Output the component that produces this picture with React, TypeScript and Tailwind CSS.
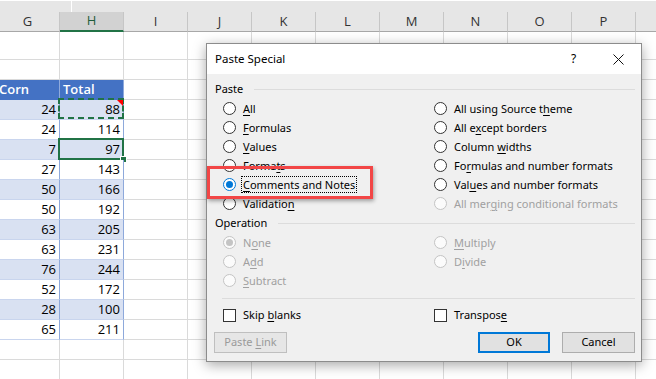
import React from 'react';

const cols = ['G', 'H', 'I', 'J', 'K', 'L', 'M', 'N', 'O', 'P', 'Q'];

const data: [number, number][] = [
  [24, 88], [24, 114], [7, 97], [27, 143], [50, 166], [50, 192],
  [63, 205], [63, 231], [76, 244], [52, 172], [28, 100], [65, 211],
];

// text with one underlined accelerator letter
const Acc = ({ t, i }: { t: string; i: number }) => (
  <span>
    {t.slice(0, i)}
    <span className="underline underline-offset-[2px] decoration-1">{t[i]}</span>
    {t.slice(i + 1)}
  </span>
);

const Radio = ({ checked, disabled }: { checked?: boolean; disabled?: boolean }) => {
  let ring = 'border-[#333333] bg-white';
  if (disabled) ring = 'border-[#c4c4c4] bg-[#fbfbfb]';
  else if (checked) ring = 'border-[#0078d7] bg-white';
  return (
    <span className={`flex h-[13px] w-[13px] shrink-0 items-center justify-center rounded-full border ${ring}`}>
      {checked && (
        <span className={`h-[7px] w-[7px] rounded-full ${disabled ? 'bg-[#c4c4c4]' : 'bg-[#0078d7]'}`} />
      )}
    </span>
  );
};

interface Opt {
  t: string;
  i: number;
  checked?: boolean;
  disabled?: boolean;
  focus?: boolean;
}

const Option = ({ o }: { o: Opt }) => (
  <div className="flex h-[19px] items-center gap-[7px]">
    <Radio checked={o.checked} disabled={o.disabled} />
    <span
      className={`leading-[15px] ${o.disabled ? 'text-[#a0a0a0]' : 'text-black'} ${
        o.focus ? 'outline-1 outline-dotted outline-black px-[1px] -ml-[1px]' : ''
      }`}
    >
      <Acc t={o.t} i={o.i} />
    </span>
  </div>
);

const GroupLabel = ({ label, h }: { label: string; h: string }) => (
  <div className={`flex items-center pl-[8px] pr-[6px] ${h}`}>
    <span>{label}</span>
    <div className="ml-[11px] h-px flex-1 bg-[#dcdcdc]" />
  </div>
);

const pasteLeft: Opt[] = [
  { t: 'All', i: 0 },
  { t: 'Formulas', i: 0 },
  { t: 'Values', i: 0 },
  { t: 'Formats', i: 5 },
  { t: 'Comments and Notes', i: 0, checked: true, focus: true },
  { t: 'Validation', i: 9 },
];

const pasteRight: Opt[] = [
  { t: 'All using Source theme', i: 18 },
  { t: 'All except borders', i: 5 },
  { t: 'Column widths', i: 7 },
  { t: 'Formulas and number formats', i: 2 },
  { t: 'Values and number formats', i: 3 },
  { t: 'All merging conditional formats', i: 7, disabled: true },
];

const opLeft: Opt[] = [
  { t: 'None', i: 1, checked: true, disabled: true },
  { t: 'Add', i: 1, disabled: true },
  { t: 'Subtract', i: 0, disabled: true },
];

const opRight: Opt[] = [
  { t: 'Multiply', i: 0, disabled: true },
  { t: 'Divide', i: 1, disabled: true },
];

const PasteSpecial = () => (
  <div className="absolute left-[206px] top-[43px] w-[436px] border border-[#8c8c8c] bg-[#f0f0f0] text-[11px] text-black shadow-[0_3px_12px_rgba(0,0,0,0.35)] font-['Noto_Sans',sans-serif]">
    {/* title bar */}
    <div className="flex h-[30px] items-center bg-white">
      <span className="flex-1 pl-[8px] text-[11.5px]">Paste Special</span>
      <span className="flex h-full w-[45px] items-center justify-center text-[12px]">?</span>
      <span className="flex h-full w-[45px] items-center justify-center">
        <svg width="11" height="11" viewBox="0 0 11 11">
          <path d="M0.5 0.5 L10.5 10.5 M10.5 0.5 L0.5 10.5" stroke="#111" strokeWidth="1" />
        </svg>
      </span>
    </div>

    {/* body */}
    <div className="flex flex-col pt-[5px] pb-[8px]">
      <GroupLabel label="Paste" h="h-[20px]" />
      <div className="grid grid-cols-[211px_1fr] pl-[16px]">
        <div className="flex flex-col">
          {pasteLeft.map((o) => (
            <Option key={o.t} o={o} />
          ))}
        </div>
        <div className="flex flex-col">
          {pasteRight.map((o) => (
            <Option key={o.t} o={o} />
          ))}
        </div>
      </div>

      <GroupLabel label="Operation" h="h-[20px]" />
      <div className="grid grid-cols-[211px_1fr] pl-[16px]">
        <div className="flex flex-col">
          {opLeft.map((o) => (
            <Option key={o.t} o={o} />
          ))}
        </div>
        <div className="flex flex-col">
          {opRight.map((o) => (
            <Option key={o.t} o={o} />
          ))}
        </div>
      </div>

      <div className="mt-[8px] ml-[15px] mr-[6px] h-px bg-[#dcdcdc]" />

      <div className="mt-[7px] grid h-[18px] grid-cols-[211px_1fr] pl-[16px]">
        <div className="flex items-center gap-[7px]">
          <span className="h-[13px] w-[13px] border border-[#333333] bg-white" />
          <Acc t="Skip blanks" i={5} />
        </div>
        <div className="flex items-center gap-[7px]">
          <span className="h-[13px] w-[13px] border border-[#333333] bg-white" />
          <Acc t="Transpose" i={8} />
        </div>
      </div>

      <div className="mt-[8px] flex h-[21px] pl-[7px] pr-[6px]">
        <div className="flex w-[73px] items-center justify-center border border-[#bfbfbf] bg-[#e6e6e6] text-[#9a9a9a]">
          <Acc t="Paste Link" i={6} />
        </div>
        <div className="flex-1" />
        <div className="flex w-[72px] items-center justify-center border-2 border-[#0078d7] bg-[#e1e1e1]">
          OK
        </div>
        <div className="ml-[12px] flex w-[73px] items-center justify-center border border-[#adadad] bg-[#e1e1e1]">
          Cancel
        </div>
      </div>
    </div>
  </div>
);

const App: React.FC = () => {
  return (
    <div className="relative h-[379px] w-[656px] overflow-hidden bg-white font-['Open_Sans',sans-serif]">
      <div className="-ml-[4px] w-[710px]">
        {/* formula bar edge */}
        <div className="flex h-[12px] border-t border-white bg-[#e6e6e6]">
          <div className="w-[76px] border-r border-white" />
        </div>

        {/* column headers (Q lies past the window edge, its letter is not visible) */}
        <div className="flex h-[20px]">
          {cols.map((c) => (
            <div
              key={c}
              className={`flex w-[64px] shrink-0 items-center justify-center border-r border-[#c6c6c6] text-[13px] ${
                c === 'H'
                  ? 'border-b-2 border-b-[#217346] bg-[#d2d2d2] text-[#1e5e3a]'
                  : 'border-b border-b-[#a8a8a8] bg-[#e6e6e6] text-[#333333]'
              }`}
            >
              {c === 'Q' ? '' : c}
            </div>
          ))}
        </div>

        {/* blank rows */}
        {[28, 20].map((h, r) => (
          <div key={r} className={`flex ${h === 28 ? 'h-[28px]' : 'h-[20px]'}`}>
            {cols.map((c) => (
              <div key={c} className="w-[64px] shrink-0 border-r border-b border-[#dadada]" />
            ))}
          </div>
        ))}

        {/* table header */}
        <div className="flex h-[20px] text-[13px]">
          <div className="flex w-[64px] shrink-0 items-center border-r border-b border-r-[#8faadc] border-b-[#4472c4] bg-[#4472c4] pl-[3px] font-semibold text-white">
            Corn
          </div>
          <div className="flex w-[64px] shrink-0 items-center border-r border-b border-r-[#8ea9db] border-b-[#4472c4] bg-[#4472c4] pl-[3px] font-semibold text-white">
            Total
          </div>
          {cols.slice(2).map((c) => (
            <div key={c} className="w-[64px] shrink-0 border-r border-b border-[#dadada]" />
          ))}
        </div>

        {/* table rows */}
        {data.map(([g, h], r) => {
          const band = r % 2 === 0 ? 'bg-[#d9e1f2]' : 'bg-white';
          return (
            <div key={r} className="flex h-[20px] text-[13px] text-black">
              <div className={`flex w-[64px] shrink-0 items-center justify-end border-r border-b border-r-[#8ea9db] border-b-[#c9d5ee] pr-[3px] ${band}`}>
                {g}
              </div>
              <div className={`relative flex w-[64px] shrink-0 items-center justify-end border-r border-b border-r-[#8ea9db] border-b-[#c9d5ee] pr-[3px] ${band}`}>
                {h}
                {r === 0 && (
                  <>
                    <div className="absolute -left-[2px] -top-[2px] h-[21px] w-[66px] border-2 border-dashed border-[#217346]" />
                    <div className="absolute right-0 top-0 h-0 w-0 border-l-[6px] border-t-[6px] border-l-transparent border-t-[#ff0000]" />
                  </>
                )}
                {r === 2 && (
                  <>
                    <div className="absolute -left-[2px] -top-[2px] h-[22px] w-[66px] border-2 border-[#217346]" />
                    <div className="absolute -bottom-[4px] -right-[4px] h-[7px] w-[7px] border border-white bg-[#217346]" />
                  </>
                )}
              </div>
              {cols.slice(2).map((c) => (
                <div key={c} className="w-[64px] shrink-0 border-r border-b border-[#dadada]" />
              ))}
            </div>
          );
        })}

        {/* trailing rows */}
        {[0, 1].map((r) => (
          <div key={r} className="flex h-[20px]">
            {cols.map((c) => (
              <div key={c} className="w-[64px] shrink-0 border-r border-b border-[#dadada]" />
            ))}
          </div>
        ))}
      </div>

      <PasteSpecial />

      {/* red highlight annotation */}
      <div className="absolute left-[207px] top-[166px] h-[33px] w-[166px] border-[3px] border-[#f24646] shadow-[1px_2px_4px_rgba(0,0,0,0.35)]" />
    </div>
  );
};

export default App;
